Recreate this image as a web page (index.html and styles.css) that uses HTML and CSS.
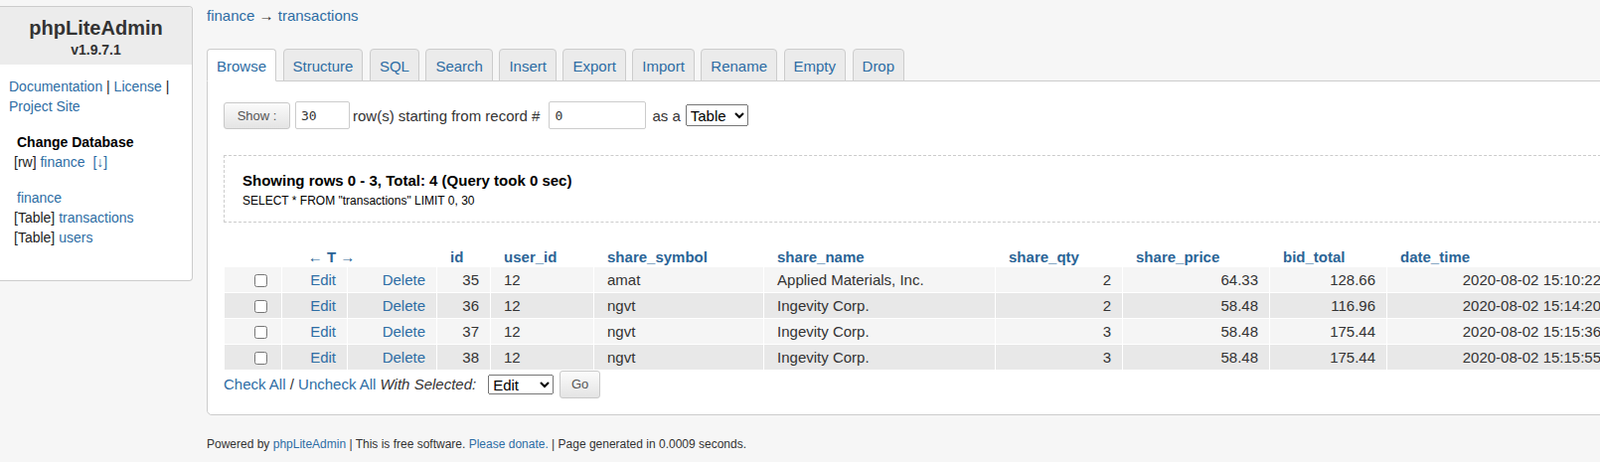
FILE: index.html
```html
<!DOCTYPE html>
<html>
  <head>
    <title>phpLiteAdmin</title>
    <link rel="stylesheet" href="styles.css">
  </head>
  <body>
    <div class="layout">
      <div id="leftNav">
        <div class="navHeader">
          <div class="appName">phpLiteAdmin</div>
          <div class="appVersion">v1.9.7.1</div>
        </div>
        <div class="navBody">
          <div class="navLinks">
            <a href="#">Documentation</a> | <a href="#">License</a> |
            <a href="#">Project Site</a>
          </div>
          <div class="dbSection">
            <div class="dbTitle">Change Database</div>
            <div>[rw] <a href="#">finance</a>&nbsp; <a href="#">[↓]</a></div>
          </div>
          <div class="tableList">
            <div class="dbName"><a href="#">finance</a></div>
            <div>[Table] <a href="#">transactions</a></div>
            <div>[Table] <a href="#">users</a></div>
          </div>
        </div>
      </div>

      <div id="content">
        <div class="crumbs"><a href="#">finance</a> → <a href="#">transactions</a></div>

        <div class="tabs">
          <a href="#" class="tab active">Browse</a>
          <a href="#" class="tab">Structure</a>
          <a href="#" class="tab">SQL</a>
          <a href="#" class="tab">Search</a>
          <a href="#" class="tab">Insert</a>
          <a href="#" class="tab">Export</a>
          <a href="#" class="tab">Import</a>
          <a href="#" class="tab">Rename</a>
          <a href="#" class="tab">Empty</a>
          <a href="#" class="tab">Drop</a>
        </div>

        <div id="main">
          <div class="showRow">
            <button type="button" class="btn btnShow">Show :</button>
            <input type="text" class="numInput numSmall" value="30" />
            <span class="showText">row(s) starting from record #</span>
            <input type="text" class="numInput numWide" value="0" />
            <span class="asText">as a</span>
            <select class="viewSelect">
              <option>Table</option>
              <option>Chart</option>
            </select>
          </div>

          <div class="confirm">
            <div class="confirmTitle">Showing rows 0 - 3, Total: 4 (Query took 0 sec)</div>
            <div class="sql">SELECT * FROM "transactions" LIMIT 0, 30</div>
          </div>

          <table class="viewTable">
            <colgroup>
              <col class="cCheck" />
              <col class="cEdit" />
              <col class="cDelete" />
              <col class="cId" />
              <col class="cUser" />
              <col class="cSymbol" />
              <col class="cName" />
              <col class="cQty" />
              <col class="cPrice" />
              <col class="cBid" />
              <col class="cDate" />
            </colgroup>
            <tr>
              <th colspan="3" class="arrows">← T →</th>
              <th>id</th>
              <th>user_id</th>
              <th>share_symbol</th>
              <th>share_name</th>
              <th>share_qty</th>
              <th>share_price</th>
              <th>bid_total</th>
              <th>date_time</th>
            </tr>
            <tr class="row1">
              <td class="right"><input type="checkbox" class="rowCheck" /></td>
              <td class="right"><a href="#">Edit</a></td>
              <td class="right"><a href="#">Delete</a></td>
              <td class="right">35</td>
              <td>12</td>
              <td>amat</td>
              <td>Applied Materials, Inc.</td>
              <td class="right">2</td>
              <td class="right">64.33</td>
              <td class="right">128.66</td>
              <td class="right">2020-08-02 15:10:22</td>
            </tr>
            <tr class="row2">
              <td class="right"><input type="checkbox" class="rowCheck" /></td>
              <td class="right"><a href="#">Edit</a></td>
              <td class="right"><a href="#">Delete</a></td>
              <td class="right">36</td>
              <td>12</td>
              <td>ngvt</td>
              <td>Ingevity Corp.</td>
              <td class="right">2</td>
              <td class="right">58.48</td>
              <td class="right">116.96</td>
              <td class="right">2020-08-02 15:14:20</td>
            </tr>
            <tr class="row1">
              <td class="right"><input type="checkbox" class="rowCheck" /></td>
              <td class="right"><a href="#">Edit</a></td>
              <td class="right"><a href="#">Delete</a></td>
              <td class="right">37</td>
              <td>12</td>
              <td>ngvt</td>
              <td>Ingevity Corp.</td>
              <td class="right">3</td>
              <td class="right">58.48</td>
              <td class="right">175.44</td>
              <td class="right">2020-08-02 15:15:36</td>
            </tr>
            <tr class="row2">
              <td class="right"><input type="checkbox" class="rowCheck" /></td>
              <td class="right"><a href="#">Edit</a></td>
              <td class="right"><a href="#">Delete</a></td>
              <td class="right">38</td>
              <td>12</td>
              <td>ngvt</td>
              <td>Ingevity Corp.</td>
              <td class="right">3</td>
              <td class="right">58.48</td>
              <td class="right">175.44</td>
              <td class="right">2020-08-02 15:15:55</td>
            </tr>
          </table>

          <div class="withSelected">
            <span><a href="#">Check All</a> / <a href="#">Uncheck All</a> <i>With Selected:</i></span>
            <select class="selSmall">
              <option>Edit</option>
              <option>Delete</option>
              <option>Export</option>
            </select>
            <button type="button" class="btn btnGo">Go</button>
          </div>
        </div>

        <div class="footer">
          Powered by <a href="#">phpLiteAdmin</a> | This is free software. <a href="#">Please donate.</a> | Page generated in 0.0009 seconds.
        </div>
      </div>
    </div>
  </body>
</html>
```

FILE: styles.css
```css
html,
body {
  overflow: hidden;
}

body {
  margin: 0;
  background-color: #f6f6f6;
  font-family: "Liberation Sans", Arial, Helvetica, sans-serif;
  color: #333;
}

a {
  color: #2e6da4;
  text-decoration: none;
}

.layout {
  display: flex;
  align-items: flex-start;
}

/* left navigation */
#leftNav {
  flex-shrink: 0;
  width: 193px;
  margin-top: 6px;
  background-color: #fff;
  border: 1px solid #ccc;
  border-left: none;
  border-radius: 0 4px 4px 0;
  font-size: 14px;
  line-height: 20px;
  color: #222;
}
.navHeader {
  padding: 9px 0 6px;
  background-color: #ececec;
  border-radius: 0 4px 0 0;
  text-align: center;
  font-weight: bold;
  color: #333;
}
.appName {
  font-size: 20px;
  line-height: 25px;
  margin-bottom: 1px;
}
.appVersion {
  font-size: 14px;
  line-height: 17px;
}
.navBody {
  padding: 12px 9px 33px 9px;
}
.dbSection,
.tableList {
  margin-top: 16px;
  padding-left: 5px;
}
.dbTitle {
  padding-left: 3px;
  font-weight: bold;
  color: #000;
}
.dbName {
  padding-left: 3px;
}

/* content */
#content {
  flex-shrink: 0;
  width: 1440px;
  margin-left: 14px;
}
.crumbs {
  margin-top: 7px;
  font-size: 15px;
  line-height: 17px;
}

.tabs {
  position: relative;
  display: flex;
  gap: 6.5px;
  margin-top: 25px;
  margin-bottom: -1px;
}
.tab {
  padding: 7px 9px 5px;
  font-size: 15px;
  line-height: 19px;
  background-color: #ebebeb;
  border: 1px solid #ccc;
  border-radius: 4px 4px 0 0;
}
.tab.active {
  background-color: #fff;
  border-bottom-color: #fff;
}

#main {
  padding: 16px;
  background-color: #fff;
  border: 1px solid #ccc;
  border-radius: 0 0 0 5px;
}

.showRow {
  display: flex;
  align-items: center;
  height: 28px;
  margin-top: 4px;
  font-size: 15px;
}

.btn {
  box-sizing: border-box;
  font-family: "Liberation Sans", Arial, sans-serif;
  font-size: 13px;
  color: #555;
  background: linear-gradient(#fbfbfb, #e4e4e4);
  border: 1px solid #c8c8c8;
  border-radius: 3px;
}
.btnShow {
  width: 67px;
  height: 27px;
}
.btnGo {
  width: 41px;
  height: 28px;
  margin-left: 6px;
}

.numInput {
  box-sizing: border-box;
  height: 28px;
  padding: 0 5px;
  font-family: "DejaVu Sans Mono", monospace;
  font-size: 13px;
  color: #333;
  border: 1px solid #ccc;
  border-radius: 2px;
}
.numSmall {
  width: 55px;
  margin-left: 5px;
}
.numWide {
  width: 98px;
  margin-left: 9px;
}
.showText {
  margin-left: 3px;
}
.asText {
  margin-left: 6px;
}
.viewSelect {
  width: 63px;
  height: 22px;
  margin-left: 5px;
  font-family: "Liberation Sans", Arial, sans-serif;
  font-size: 15px;
  color: #000;
}

.confirm {
  margin-top: 26px;
  padding: 15px 18px 11px;
  border: 1px dashed #ccc;
  color: #000;
}
.confirmTitle {
  font-size: 15px;
  line-height: 20px;
  font-weight: bold;
}
.sql {
  font-size: 12px;
  line-height: 20px;
}

/* rows table */
.viewTable {
  width: 1398px;
  margin-top: 23px;
  border-spacing: 1px;
  table-layout: fixed;
  font-size: 15px;
}
.viewTable th {
  padding: 3px 11px 0 13px;
  line-height: 16.7px;
  text-align: left;
  font-weight: bold;
  color: #2a6496;
}
.viewTable th.arrows {
  text-align: center;
}
.viewTable td {
  padding: 4px 11px 4px 13px;
  line-height: 17px;
  color: #333;
  white-space: nowrap;
}
.viewTable td.right {
  text-align: right;
}
.row1 td {
  background-color: #f5f5f5;
}
.row2 td {
  background-color: #e8e8e8;
}
.rowCheck {
  margin: 0 3px 0 4px;
  vertical-align: middle;
}

.cCheck { width: 57px; }
.cEdit { width: 65px; }
.cDelete { width: 89px; }
.cId { width: 53px; }
.cUser { width: 103px; }
.cSymbol { width: 170px; }
.cName { width: 232px; }
.cQty { width: 127px; }
.cPrice { width: 147px; }
.cBid { width: 117px; }
.cDate { width: 226px; }

.withSelected {
  display: flex;
  align-items: center;
  height: 28px;
  font-size: 15px;
}
.selSmall {
  height: 20px;
  margin-left: 12px;
  font-family: "Liberation Sans", Arial, sans-serif;
  font-size: 15px;
  color: #000;
}

.footer {
  margin-top: 22px;
  font-size: 12px;
  color: #333;
}
```
